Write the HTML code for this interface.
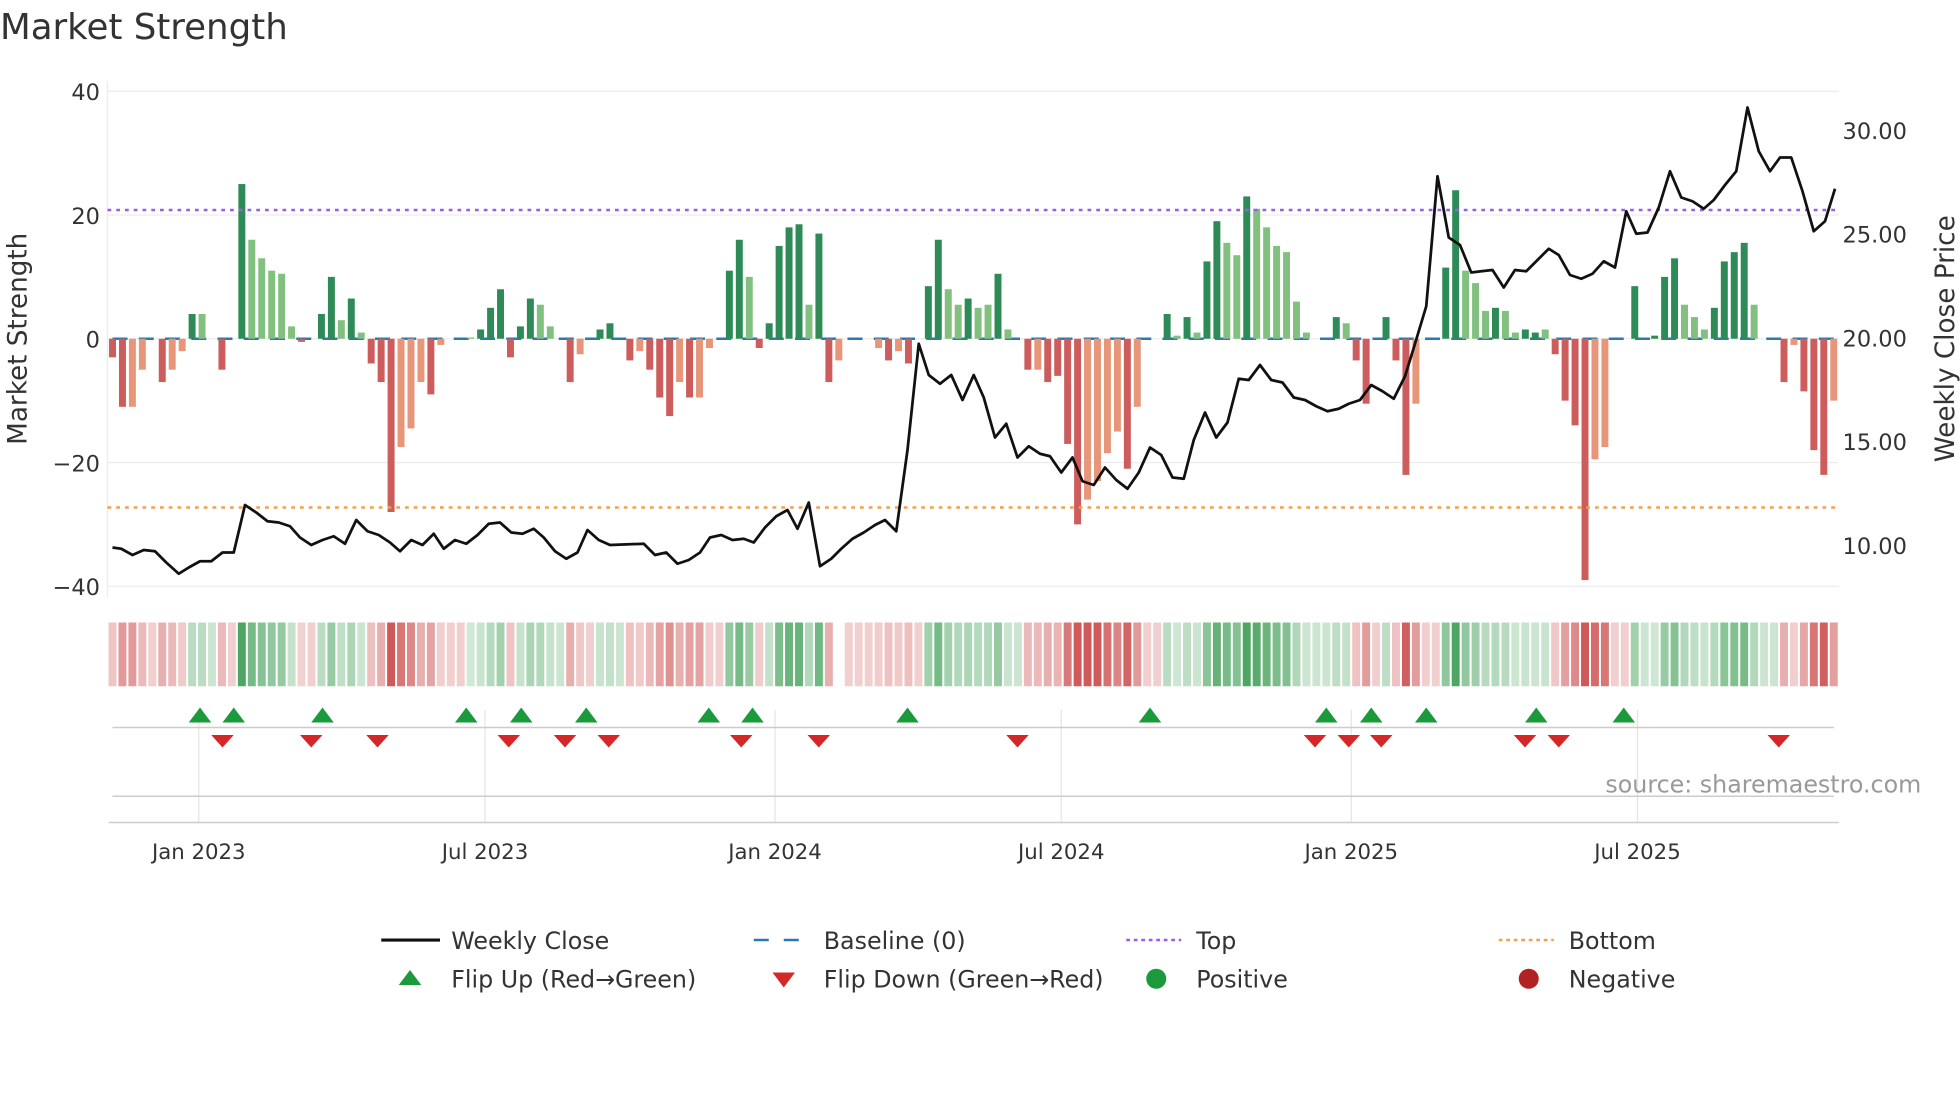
<!DOCTYPE html>
<html><head><meta charset="utf-8"><style>
html,body{margin:0;padding:0;background:#fff;}
svg{display:block;font-family:"DejaVu Sans","Liberation Sans",sans-serif;}
</style></head><body>
<svg id="s" width="1960" height="1102" viewBox="0 0 1568 881.6" xmlns="http://www.w3.org/2000/svg">
<rect width="1568" height="882" fill="#fff"/>
<text x="0" y="31" font-size="28.5" fill="#333">Market Strength</text>
<g stroke="#ececec" stroke-width="1">
<line x1="86" x2="1471" y1="73" y2="73"/><line x1="86" x2="1471" y1="172" y2="172"/>
<line x1="86" x2="1471" y1="271" y2="271"/><line x1="86" x2="1471" y1="370" y2="370"/>
<line x1="86" x2="1471" y1="469" y2="469"/>
<line x1="86" x2="86" y1="65" y2="478"/>
</g>
<g font-size="18" fill="#333" text-anchor="end">
<text x="80" y="80">40</text><text x="80" y="179">20</text><text x="80" y="278">0</text>
<text x="80" y="377">−20</text><text x="80" y="476">−40</text>
</g>
<g font-size="18" fill="#333">
<text x="1474" y="111">30.00</text><text x="1474" y="194">25.00</text><text x="1474" y="277">20.00</text>
<text x="1474" y="360">15.00</text><text x="1474" y="443">10.00</text>
</g>
<text transform="translate(21,271) rotate(-90)" font-size="21" fill="#333" text-anchor="middle">Market Strength</text>
<text transform="translate(1563,271) rotate(-90)" font-size="21" fill="#333" text-anchor="middle">Weekly Close Price</text>
<line x1="90" x2="1467" y1="271" y2="271" stroke="#2a7ab0" stroke-width="2" stroke-dasharray="12,9"/>
<g id="bars"></g>
<line x1="86" x2="1471" y1="168" y2="168" stroke="#9b5de5" stroke-width="2" stroke-dasharray="3,4"/>
<line x1="86" x2="1471" y1="406" y2="406" stroke="#f0a050" stroke-width="2" stroke-dasharray="3,4"/>
<polyline id="price" fill="none" stroke="#111" stroke-width="2.2" stroke-linejoin="round"/>
<g id="heat"></g>
<g stroke="#e5e5e5" stroke-width="1">
<line x1="159" x2="159" y1="568" y2="658"/><line x1="388" x2="388" y1="568" y2="658"/>
<line x1="620" x2="620" y1="568" y2="658"/><line x1="849" x2="849" y1="568" y2="658"/>
<line x1="1081" x2="1081" y1="568" y2="658"/><line x1="1310" x2="1310" y1="568" y2="658"/>
</g>
<line x1="90" x2="1467" y1="582" y2="582" stroke="#ccc" stroke-width="1.2"/>
<line x1="90" x2="1467" y1="637" y2="637" stroke="#ccc" stroke-width="1.2"/>
<line x1="87" x2="1471" y1="658" y2="658" stroke="#ccc" stroke-width="1.2"/>
<g id="tri"></g>
<text x="1537" y="634" font-size="19" fill="#999" text-anchor="end">source: sharemaestro.com</text>
<g font-size="17" fill="#333" text-anchor="middle">
<text x="159" y="687">Jan 2023</text><text x="388" y="687">Jul 2023</text><text x="620" y="687">Jan 2024</text>
<text x="849" y="687">Jul 2024</text><text x="1081" y="687">Jan 2025</text><text x="1310" y="687">Jul 2025</text>
</g>
<g font-size="19" fill="#333">
<line x1="305" x2="352" y1="752" y2="752" stroke="#111" stroke-width="2.5"/><text x="361" y="759">Weekly Close</text>
<line x1="603" x2="645" y1="752" y2="752" stroke="#2a7ab0" stroke-width="2" stroke-dasharray="12,12"/><text x="659" y="759">Baseline (0)</text>
<line x1="901" x2="945" y1="752" y2="752" stroke="#9b5de5" stroke-width="2" stroke-dasharray="3,3"/><text x="957" y="759">Top</text>
<line x1="1199" x2="1243" y1="752" y2="752" stroke="#f0a050" stroke-width="2" stroke-dasharray="3,3"/><text x="1255" y="759">Bottom</text>
<polygon points="319,788 337,788 328,776" fill="#1a9a3a"/><text x="361" y="790">Flip Up (Red→Green)</text>
<polygon points="618,778 636,778 627,790" fill="#d62728"/><text x="659" y="790">Flip Down (Green→Red)</text>
<circle cx="925" cy="783" r="8" fill="#1a9a3a"/><text x="957" y="790">Positive</text>
<circle cx="1223" cy="783" r="8" fill="#b22222"/><text x="1255" y="790">Negative</text>
</g>
</svg>
<script>
var NS="http://www.w3.org/2000/svg";
function el(t,a,p){var e=document.createElementNS(NS,t);for(var k in a)e.setAttribute(k,a[k]);document.getElementById(p).appendChild(e);return e;}
var B=[[-3,0],[-11,0],[-11,1],[-5,1],[0,0],[-7,0],[-5,1],[-2,1],[4,0],[4,1],[0,0],[-5,0],[0,0],[25,0],[16,1],[13,1],[11,1],[10.5,1],[2,1],[-0.5,0],[0,0],[4,0],[10,0],[3,1],[6.5,0],[1,1],[-4,0],[-7,0],[-28,0],[-17.5,1],[-14.5,1],[-7,1],[-9,0],[-1,1],[0,0],[0,0],[0.2,1],[1.5,0],[5,0],[8,0],[-3,0],[2,0],[6.5,0],[5.5,1],[2,1],[0,0],[-7,0],[-2.5,1],[0,0],[1.5,0],[2.5,0],[0,0],[-3.5,0],[-2,1],[-5,0],[-9.5,0],[-12.5,0],[-7,1],[-9.5,0],[-9.5,1],[-1.5,1],[0,0],[11,0],[16,0],[10,1],[-1.5,0],[2.5,0],[15,0],[18,0],[18.5,0],[5.5,1],[17,0],[-7,0],[-3.5,1],[0,0],[0,0],[0,0],[-1.5,1],[-3.5,0],[-2,1],[-4,0],[0,0],[8.5,0],[16,0],[8,1],[5.5,1],[6.5,0],[5,1],[5.5,1],[10.5,0],[1.5,1],[0,0],[-5,0],[-5,1],[-7,0],[-6,0],[-17,0],[-30,0],[-26,1],[-23,1],[-18.5,1],[-15,1],[-21,0],[-11,1],[0,0],[0,0],[4,0],[0.5,1],[3.5,0],[1,1],[12.5,0],[19,0],[15.5,1],[13.5,1],[23,0],[21,1],[18,1],[15,1],[14,1],[6,1],[1,1],[0,0],[0,0],[3.5,0],[2.5,1],[-3.5,0],[-10.5,0],[0,0],[3.5,0],[-3.5,0],[-22,0],[-10.5,1],[0,0],[0,0],[11.5,0],[24,0],[11,1],[9,1],[4.5,1],[5,0],[4.5,1],[1,1],[1.5,0],[1,0],[1.5,1],[-2.5,0],[-10,0],[-14,0],[-39,0],[-19.5,1],[-17.5,1],[0,0],[0,0],[8.5,0],[0,0],[0.5,0],[10,0],[13,0],[5.5,1],[3.5,1],[1.5,1],[5,0],[12.5,0],[14,0],[15.5,0],[5.5,1],[0,0],[0,0],[-7,0],[-1,1],[-8.5,0],[-18,0],[-22,0],[-10,1]];
var n=B.length,x0=90,x1=1467,st=(x1-x0)/(n-1),u=4.95,prev=-1;
B.forEach(function(b,i){var x=x0+i*st,v=b[0];
if(v!=0){var c=v>0?(b[1]?"#82c07f":"#2e8b57"):(b[1]?"#e8967a":"#cd5c5c");
var h=Math.abs(v)*u;el("rect",{x:x-st*0.35,y:v>0?271-h:271,width:st*0.7,height:h,fill:c},"bars");prev=v;}
if(x>666&&x<678)return;
var vv=v!=0?v:(prev>0?1:-1);
var a=Math.min(0.85,0.22+Math.abs(vv)/22*0.6);var hc=vv>0?"rgba(46,150,70,"+a+")":"rgba(200,60,60,"+a+")";
el("rect",{x:x-st/2+0.8,y:498,width:st-1.6,height:51,fill:hc},"heat");});
var P=[[90,438],[97,439],[106,444],[115,440],[124,441],[133,450],[143,459],[151,454],[160,449],[169,449],[178,442],[187,442],[196,404],[205,410],[214,417],[223,418],[232,421],[240,430],[249,436],[258,432],[267,429],[276,435],[285,416],[294,425],[303,428],[312,434],[320,441],[329,432],[338,436],[347,427],[355,439],[364,432],[373,435],[382,428],[391,419],[400,418],[409,426],[418,427],[427,423],[435,430],[444,441],[453,447],[462,442],[470,424],[479,432],[488,436],[515,435],[524,444],[533,442],[542,451],[551,448],[560,442],[568,430],[577,428],[586,432],[595,431],[603,434],[612,422],[621,413],[630,408],[638,423],[647,402],[656,453],[665,447],[673,439],[682,431],[691,426],[700,420],[708,416],[717,425],[726,360],[735,275],[743,300],[752,307],[761,300],[770,320],[779,300],[787,318],[796,350],[805,339],[814,366],[823,357],[832,363],[840,365],[849,378],[858,366],[866,385],[875,388],[884,374],[893,384],[902,391],[911,378],[920,358],[929,364],[938,382],[947,383],[955,352],[964,330],[973,350],[982,338],[991,303],[999,304],[1008,292],[1017,304],[1026,306],[1035,318],[1044,320],[1053,325],[1062,329],[1071,327],[1079,323],[1088,320],[1097,308],[1106,313],[1115,319],[1124,301],[1132,275],[1141,245],[1150,141],[1159,190],[1168,196],[1177,218],[1185,217],[1194,216],[1203,230],[1212,216],[1221,217],[1230,208],[1239,199],[1247,204],[1256,220],[1265,223],[1274,219],[1283,209],[1292,214],[1301,169],[1309,187],[1318,186],[1327,166],[1336,137],[1345,158],[1354,161],[1363,167],[1371,160],[1380,148],[1389,137],[1398,86],[1407,121],[1416,137],[1424,126],[1433,126],[1442,153],[1451,185],[1460,177],[1468,151]];
document.getElementById("price").setAttribute("points",P.map(function(p){return p.join(",")}).join(" "));
[160,187,258,373,417,469,567,602,726,920,1061,1097,1141,1229,1299].forEach(function(x){el("polygon",{points:(x-9)+",578 "+(x+9)+",578 "+x+",566",fill:"#1a9a3a"},"tri");});
[178,249,302,407,452,487,593,655,814,1052,1079,1105,1220,1247,1423].forEach(function(x){el("polygon",{points:(x-9)+",588 "+(x+9)+",588 "+x+",598",fill:"#d62728"},"tri");});
</script>
</body></html>
